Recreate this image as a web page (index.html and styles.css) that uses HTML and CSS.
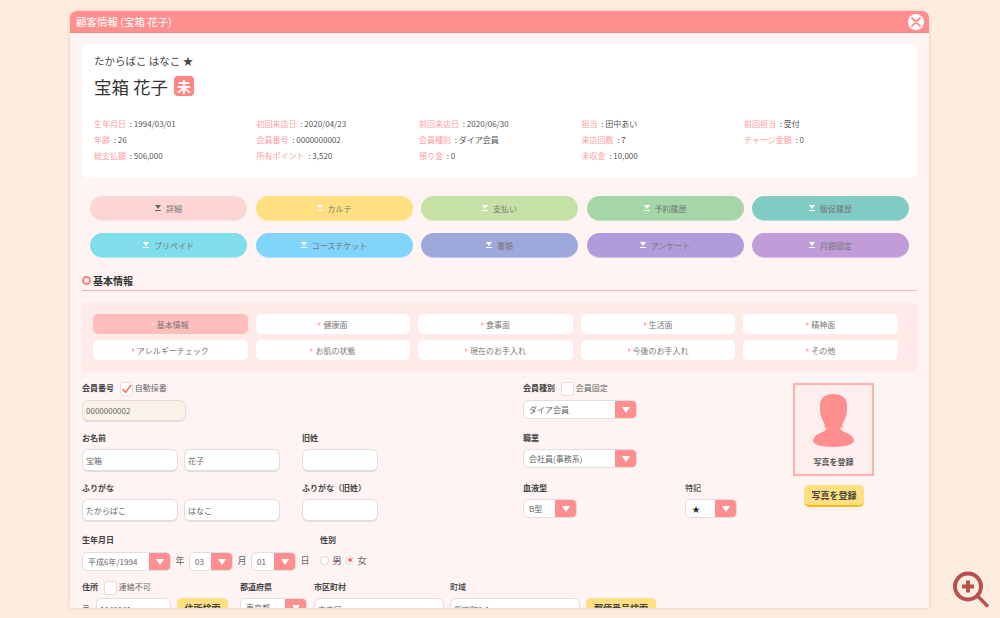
FILE: index.html
```html
<!DOCTYPE html>
<html lang="ja">
<head>
  <meta charset="UTF-8">
  <title>顧客情報</title>
  <link rel="stylesheet" href="styles.css">
</head>
<body>

<div class="modal">
  <div class="modal-head">
    <span>顧客情報 (宝箱 花子)</span>
    <span class="close">
      <svg width="10" height="10" viewBox="0 0 10 10"><path d="M1 1L9 9M9 1L1 9" stroke="#ff8f8f" stroke-width="1.8" stroke-linecap="round"/></svg>
    </span>
  </div>

  <div class="modal-body">
    <div class="card">
      <div class="kana">たからばこ はなこ ★</div>
      <div class="name">宝箱 花子<span class="badge">未</span></div>
      <div class="info">
        <div><em>生年月日</em> : 1994/03/01</div>
        <div><em>初回来店日</em> : 2020/04/23</div>
        <div><em>前回来店日</em> : 2020/06/30</div>
        <div><em>担当</em> : 田中あい</div>
        <div><em>前回担当</em> : 受付</div>
        <div><em>年齢</em> : 26</div>
        <div><em>会員番号</em> : 0000000002</div>
        <div><em>会員種別</em> : ダイア会員</div>
        <div><em>来店回数</em> : 7</div>
        <div><em>チャージ金額</em> : 0</div>
        <div><em>総支払額</em> : 506,000</div>
        <div><em>所有ポイント</em> : 3,520</div>
        <div><em>預り金</em> : 0</div>
        <div><em>未収金</em> : 10,000</div>
      </div>
    </div>

    <div class="actions">
      <a class="action c1"><i class="dl"></i>詳細</a>
      <a class="action c2"><i class="dl"></i>カルテ</a>
      <a class="action c3"><i class="dl"></i>支払い</a>
      <a class="action c4"><i class="dl"></i>予約履歴</a>
      <a class="action c5"><i class="dl"></i>販促履歴</a>
      <a class="action c6"><i class="dl"></i>プリペイド</a>
      <a class="action c7"><i class="dl"></i>コースチケット</a>
      <a class="action c8"><i class="dl"></i>書類</a>
      <a class="action c9"><i class="dl"></i>アンケート</a>
      <a class="action c10"><i class="dl"></i>月額固定</a>
    </div>

    <h2 class="section-title"><i class="ring"></i>基本情報</h2>

    <div class="tabs">
      <a class="tab active">基本情報</a>
      <a class="tab">健康面</a>
      <a class="tab">食事面</a>
      <a class="tab">生活面</a>
      <a class="tab">精神面</a>
      <a class="tab">アレルギーチェック</a>
      <a class="tab">お肌の状態</a>
      <a class="tab">現在のお手入れ</a>
      <a class="tab">今後のお手入れ</a>
      <a class="tab">その他</a>
    </div>

    <div class="form">
      <div class="form-main">
        <div class="row row-first">
          <div class="field w441">
            <div class="label">会員番号 <span class="check on"><svg width="11" height="10" viewBox="0 0 11 10"><path d="M1.5 5L4.5 8.500L10 1" fill="none" stroke="#ff5f5f" stroke-width="1.3"/></svg></span><span class="note">自動採番</span></div>
            <input class="text readonly w104" value="0000000002">
          </div>
          <div class="field">
            <div class="label">会員種別 <span class="check"></span><span class="note">会員固定</span></div>
            <div class="select w114"><span>ダイア会員</span><b></b></div>
          </div>
        </div>

        <div class="row">
          <div class="field w220">
            <div class="label">お名前</div>
            <div class="inline"><input class="text w96" value="宝箱"><input class="text w96" value="花子"></div>
          </div>
          <div class="field w221">
            <div class="label">旧姓</div>
            <input class="text w76">
          </div>
          <div class="field">
            <div class="label">職業</div>
            <div class="select w114"><span>会社員(事務系)</span><b></b></div>
          </div>
        </div>

        <div class="row">
          <div class="field w220">
            <div class="label">ふりがな</div>
            <div class="inline"><input class="text w96" value="たからばこ"><input class="text w96" value="はなこ"></div>
          </div>
          <div class="field w221">
            <div class="label">ふりがな（旧姓）</div>
            <input class="text w76">
          </div>
          <div class="field w162">
            <div class="label">血液型</div>
            <div class="select w54"><span>B型</span><b></b></div>
          </div>
          <div class="field">
            <div class="label thin">特記</div>
            <div class="select w52"><span class="dark">★</span><b></b></div>
          </div>
        </div>

        <div class="row row-birth">
          <div class="field w238">
            <div class="label">生年月日</div>
            <div class="inline birth">
              <div class="select w89"><span>平成6年/1994</span><b></b></div><span class="unit">年</span>
              <div class="select w44"><span>03</span><b></b></div><span class="unit">月</span>
              <div class="select w45"><span>01</span><b></b></div><span class="unit">日</span>
            </div>
          </div>
          <div class="field">
            <div class="label">性別</div>
            <div class="radios">
              <span class="radio"></span><span class="unit">男</span>
              <span class="radio on"></span><span class="unit">女</span>
            </div>
          </div>
        </div>

        <div class="row">
          <div class="field w158">
            <div class="label">住所 <span class="check"></span><span class="note">連絡不可</span></div>
            <div class="inline zip"><span class="mark">〒</span><input class="text w75" value="1040061"><a class="yellow-btn w51">住所検索</a></div>
          </div>
          <div class="field w74">
            <div class="label">都道府県</div>
            <div class="select w67"><span>東京都</span><b></b></div>
          </div>
          <div class="field w136">
            <div class="label">市区町村</div>
            <input class="text w130" value="中央区">
          </div>
          <div class="field">
            <div class="label thin">町域</div>
            <div class="inline zip"><input class="text w130" value="銀座町0-1"><a class="yellow-btn w70">郵便番号検索</a></div>
          </div>
        </div>
      </div>

      <div class="photo-col">
        <div class="photo">
          <svg width="41" height="53" viewBox="0 0 41 53"><path fill="#ff8f8f" d="M20.500 0C28 0 34 3 34 12C34 17 34 21 32 25C31 27 30 29 29 31L30 33L27 34C28 37 32 38 36 40C39 42 41 44 41 47C41 50 32 53 20.500 53C9 53 0 50 0 47C0 44 2 42 5 40C9 38 13 37 14 34L11 33L12 31C11 29 10 27 9 25C7 21 7 17 7 12C7 3 13 0 20.500 0Z"/></svg>
          <span>写真を登録</span>
        </div>
        <a class="yellow-btn photo-btn">写真を登録</a>
      </div>
    </div>
  </div>
</div>

<a class="zoom-btn">
  <svg width="38" height="38" viewBox="0 0 38 38">
    <circle cx="16" cy="15.500" r="13" fill="none" stroke="#b85050" stroke-width="4"/>
    <path d="M10 15.500H22M16 9.500V21.500" stroke="#b85050" stroke-width="4"/>
    <path d="M26.500 26L35 34.500" stroke="#b85050" stroke-width="3.500" stroke-linecap="round"/>
  </svg>
</a>

</body>
</html>
```

FILE: styles.css
```css
* { box-sizing: border-box; }

html, body { height: 100%; }

body {
  margin: 0;
  padding: 11px 70px 10px;
  overflow: hidden;
  background: #fdeddf;
  font-family: "Noto Sans CJK JP", "Noto Sans", sans-serif;
  font-size: 8px;
  color: #555;
}

.modal {
  width: 859px;
  height: 597px;
  overflow: hidden;
  border-radius: 7px 7px 0 0;
  box-shadow: 0 0 3px rgba(190,130,110,0.45);
  background-color: #fff3f2;
  background-image:
    repeating-linear-gradient(0deg, rgba(255,255,255,0.2) 0 1px, transparent 1px 4px),
    repeating-linear-gradient(90deg, rgba(255,255,255,0.2) 0 1px, transparent 1px 4px);
}

.modal-head {
  height: 22px;
  padding: 0 5px 0 6px;
  display: flex;
  justify-content: space-between;
  align-items: center;
  background: #ff8f8f;
  border-bottom: 1px solid #fb8686;
  color: #fff;
  font-size: 10.500px;
}

.close {
  width: 16px;
  height: 16px;
  border-radius: 50%;
  background: #fff;
  display: flex;
  justify-content: center;
  align-items: center;
}

.modal-body { padding: 11px 12px 0; }

/* customer card */
.card {
  height: 134px;
  padding: 10px 12px 0;
  background: #fff;
  border-radius: 6px;
}

.kana {
  font-size: 10.500px;
  line-height: 14px;
  color: #444;
}

.name {
  margin-top: 4px;
  height: 28px;
  display: flex;
  align-items: center;
  gap: 6px;
  font-size: 17.500px;
  color: #333;
}

.badge {
  width: 20px;
  height: 20px;
  border-radius: 4px;
  background: #ff8585;
  color: #fff;
  font-size: 14px;
  font-weight: 700;
  display: flex;
  justify-content: center;
  align-items: center;
}

.info {
  margin-top: 15px;
  display: grid;
  grid-template-columns: repeat(5, 162.500px);
  grid-auto-rows: 16px;
  align-items: center;
  color: #555;
}

.info em {
  margin-right: 2px;
  font-style: normal;
  color: #ff9c9c;
}

/* coloured buttons */
.actions {
  margin: 18px 8px 0;
  display: grid;
  grid-template-columns: repeat(5, 157px);
  grid-auto-rows: 25px;
  gap: 12px 8.500px;
}

.action {
  display: flex;
  justify-content: center;
  align-items: center;
  gap: 5px;
  border-radius: 12.500px;
  color: #777;
  border-bottom: 1px solid rgba(255,255,255,0.35);
}

.c1 { background: #fdd5d5; }
.c2 { background: #ffdf80; }
.c3 { background: #c5e1a5; }
.c4 { background: #a5d6a7; }
.c5 { background: #80cbc4; }
.c6 { background: #80deea; }
.c7 { background: #81d4fa; }
.c8 { background: #9fa8da; }
.c9 { background: #b09cdb; }
.c10 { background: #c09cd8; }

.dl {
  width: 6px;
  height: 6px;
  border-top: 4px solid #fff;
  border-left: 3px solid transparent;
  border-right: 3px solid transparent;
  position: relative;
}

.dl::after {
  content: "";
  position: absolute;
  left: -3px;
  top: 1px;
  width: 6px;
  height: 1px;
  background: #fff;
}

.c1 .dl { border-top-color: #666; }
.c1 .dl::after { background: #666; }

/* section title */
.section-title {
  margin: 15px 0 0;
  height: 18px;
  padding-bottom: 2px;
  display: flex;
  align-items: center;
  gap: 2px;
  font-size: 10px;
  font-weight: 700;
  color: #333;
  border-bottom: 1px solid #ffb3b3;
}

.ring {
  width: 9px;
  height: 9px;
  border-radius: 50%;
  border: 2px solid #ff7f7f;
}

/* sub tabs */
.tabs {
  margin-top: 12px;
  padding: 11px 19px 12px 11px;
  display: grid;
  grid-template-columns: repeat(5, 154.600px);
  grid-auto-rows: 20px;
  gap: 6px 8px;
  background: #ffeaea;
}

.tab {
  display: flex;
  justify-content: center;
  align-items: center;
  gap: 2px;
  background: #fff;
  border-radius: 5px;
  color: #777;
}

.tab::before {
  content: "";
  border-left: 3px solid #ffb0b0;
  border-top: 2.500px solid transparent;
  border-bottom: 2.500px solid transparent;
}

.tab.active { background: #ffbdbd; }
.tab.active::before { border-left-color: #ffe0e0; }

/* form */
.form {
  margin-top: 10px;
  display: flex;
  align-items: flex-start;
}

.form-main { width: 711px; flex: none; }

.row {
  display: flex;
  align-items: flex-start;
  height: 50px;
}

.row-birth { height: 47px; margin-top: 2px; }

.label {
  height: 17px;
  display: flex;
  align-items: flex-start;
  gap: 3px;
  font-weight: 700;
  line-height: 12px;
  color: #444;
  white-space: pre;
}

.row-first .label,
.row-birth .label { height: 18px; }

.label.thin { font-weight: 500; }

.note { font-weight: 400; color: #666; margin-left: -1px; }

.check {
  width: 13px;
  height: 14px;
  margin-left: 1px;
  background: #fff;
  border: 1px solid #e2dede;
  border-radius: 3px;
  display: flex;
  justify-content: center;
  align-items: center;
}

.text {
  display: block;
  height: 23px;
  padding: 0 3px;
  border: 1px solid #e2dede;
  border-bottom-width: 2px;
  border-radius: 6px;
  background: #fff;
  font: inherit;
  color: #666;
}

.readonly { height: 22px; background: #f9f2e9; }

.inline { display: flex; align-items: flex-start; gap: 6px; }
.birth { gap: 0; }
.zip { gap: 6px; }

.select {
  height: 19px;
  display: flex;
  overflow: hidden;
  background: #fff;
  border: 1px solid #e2dede;
  border-radius: 5px;
}

.select span {
  flex: 1;
  padding-left: 5px;
  line-height: 17px;
  color: #666;
  white-space: nowrap;
}

.select .dark { color: #222; padding-left: 6px; }

.select b {
  flex: none;
  width: 22px;
  margin: -1px -1px -1px 0;
  display: flex;
  justify-content: center;
  align-items: center;
  background: #ff8f8f;
}

.select b::after {
  content: "";
  border-top: 6px solid #fff;
  border-left: 4px solid transparent;
  border-right: 4px solid transparent;
}

.unit {
  width: 18px;
  flex: none;
  text-align: center;
  line-height: 17px;
  font-size: 9px;
  color: #666;
}

.radios {
  display: flex;
  align-items: center;
  height: 18px;
  margin-top: -1px;
}

.radios .unit {
  width: 10px;
  margin: 0 3px;
  font-size: 9.500px;
}

.radio {
  width: 9px;
  height: 9px;
  border-radius: 50%;
  background: #fff;
  border: 1px solid #dcd8d8;
  flex: none;
  display: flex;
  justify-content: center;
  align-items: center;
}

.radio.on::after {
  content: "";
  width: 4px;
  height: 4px;
  border-radius: 50%;
  background: #ff7070;
}

.mark { width: 8px; line-height: 20px; color: #666; }

.yellow-btn {
  height: 22px;
  display: flex;
  justify-content: center;
  align-items: center;
  flex: none;
  background: #ffdf80;
  border-bottom: 1px solid #f5b820;
  border-radius: 5px;
  font-size: 9px;
  font-weight: 700;
  color: #444;
}

/* photo */
.photo-col { width: 81px; margin-top: 1px; flex: none; }

.photo {
  height: 93px;
  padding-top: 9px;
  display: flex;
  flex-direction: column;
  align-items: center;
  border: 2px solid #ffb0b0;
  background: #ffeeee;
  font-weight: 700;
  color: #555;
}

.photo span { margin-top: 9px; }

.photo-btn {
  width: 60px;
  margin: 9px 0 0 11px;
  border-bottom-width: 2px;
}

/* widths */
.w441 { width: 441px; }
.w238 { width: 238px; }
.w221 { width: 221px; }
.w220 { width: 220px; }
.w162 { width: 162px; }
.w158 { width: 158px; }
.w136 { width: 136px; }
.w130 { width: 130px; }
.w114 { width: 114px; }
.w104 { width: 104px; }
.w96 { width: 96px; }
.w89 { width: 89px; }
.w76 { width: 76px; }
.w75 { width: 75px; }
.w74 { width: 74px; }
.w70 { width: 70px; }
.w67 { width: 67px; }
.w54 { width: 54px; }
.w52 { width: 52px; }
.w51 { width: 51px; }
.w45 { width: 45px; }
.w44 { width: 44px; }

/* page zoom control */
.zoom-btn {
  position: fixed;
  left: 952px;
  top: 571px;
  width: 38px;
  height: 38px;
}
```
